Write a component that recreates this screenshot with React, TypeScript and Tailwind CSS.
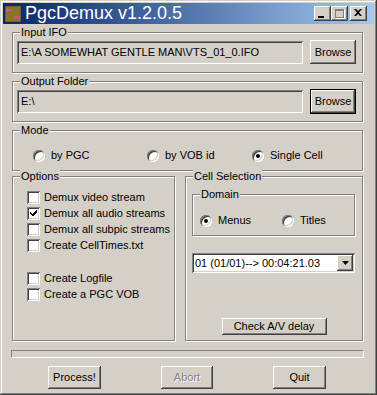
import React from 'react';

const raised =
  'bg-[#d4d0c8] shadow-[inset_-1px_-1px_#404040,inset_1px_1px_#ffffff,inset_-2px_-2px_#808080,inset_2px_2px_#d4d0c8]';
const sunken =
  'shadow-[inset_1px_1px_#808080,inset_-1px_-1px_#ffffff,inset_2px_2px_#404040,inset_-2px_-2px_#d4d0c8]';

function Group({ label, className, children }: { label: string; className?: string; children?: React.ReactNode }) {
  return (
    <div className={`relative border border-[#808080] shadow-[1px_1px_0_#ffffff,inset_1px_1px_0_#ffffff] ${className || ''}`}>
      <span className="absolute left-[7px] top-[-7px] bg-[#d4d0c8] px-[1px] leading-[13px]">{label}</span>
      {children}
    </div>
  );
}

function Button({ children, className, isDefault, disabled }: { children: React.ReactNode; className?: string; isDefault?: boolean; disabled?: boolean }) {
  const inner = (
    <div className={`flex h-full w-full items-center justify-center ${raised} ${disabled ? 'text-[#808080] [text-shadow:1px_1px_0_#ffffff]' : ''}`}>
      {children}
    </div>
  );
  if (isDefault) {
    return <div className={`border border-black ${className || ''}`}>{inner}</div>;
  }
  return <div className={className}>{inner}</div>;
}

function Radio({ checked, label, className }: { checked?: boolean; label: string; className?: string }) {
  return (
    <div className={`flex items-center ${className || ''}`}>
      <div className={`flex h-[12px] w-[12px] items-center justify-center rounded-full bg-white ${sunken}`}>
        {checked && <div className="h-[4px] w-[4px] rounded-full bg-black" />}
      </div>
      <span className="ml-[6px] leading-[13px]">{label}</span>
    </div>
  );
}

function Check({ checked, label }: { checked?: boolean; label: string }) {
  return (
    <div className="flex h-[16px] items-center">
      <div className={`relative h-[13px] w-[13px] bg-white ${sunken}`}>
        {checked && (
          <svg className="absolute left-[3px] top-[3px]" width="7" height="7" viewBox="0 0 7 7">
            <path d="M0 2h1v1h1v1h1V3h1V2h1V1h1V0h1v3h-1v1h-1v1h-1v1h-1v1H3V6H2V5H1V4H0z" fill="#000" />
          </svg>
        )}
      </div>
      <span className="ml-[4px] leading-[13px]">{label}</span>
    </div>
  );
}

function TextField({ value }: { value: string }) {
  return (
    <div className={`flex h-[23px] w-[286px] items-center pl-[4px] ${sunken}`}>
      <span className="whitespace-nowrap">{value}</span>
    </div>
  );
}

function AppIcon() {
  return (
    <svg width="16" height="16" viewBox="0 0 16 16">
      <rect width="16" height="16" fill="#85762c" />
      <rect x="0" y="0" width="16" height="16" fill="none" stroke="#5c5020" strokeWidth="1" />
      <path d="M1 4h6M3 2l-2 2 2 2M9 11h6M13 9l2 2-2 2" stroke="#ff30ff" strokeWidth="1" fill="none" />
    </svg>
  );
}

export default function App() {
  return (
    <div className="relative h-[395px] w-[377px] overflow-hidden bg-[#d4d0c8] p-[3px] font-['Liberation_Sans',Arial,sans-serif] text-[11px] text-black shadow-[inset_-1px_-1px_#404040,inset_1px_1px_#d4d0c8,inset_-2px_-2px_#808080,inset_2px_2px_#ffffff]">
      {/* title bar */}
      <div className="flex h-[21px] items-center bg-gradient-to-r from-[#0a246a] to-[#a6caf0] pl-[2px] pr-[7px]">
        <AppIcon />
        <span className="ml-[4px] text-[18px] leading-[21px] text-white">PgcDemux v1.2.0.5</span>
        <div className="ml-auto flex items-center">
          <div className={`relative h-[15px] w-[17px] ${raised}`}>
            <div className="absolute bottom-[3px] left-[4px] h-[2px] w-[6px] bg-black" />
          </div>
          <div className={`relative h-[15px] w-[17px] ${raised}`}>
            <div className="absolute left-[4px] top-[3px] h-[9px] w-[9px] border border-t-2 border-[#808080] shadow-[1px_1px_0_#ffffff]" />
          </div>
          <div className={`relative ml-[2px] h-[15px] w-[17px] ${raised}`}>
            <svg className="absolute left-[4px] top-[3px]" width="8" height="7" viewBox="0 0 8 7">
              <path d="M0 0h2l2 2 2-2h2L5 3.5 8 7H6L4 5 2 7H0l3-3.5z" fill="#000" />
            </svg>
          </div>
        </div>
      </div>

      <div className="flex flex-col pl-[9px] pr-[11px]">
        <Group label="Input IFO" className="mt-[8px] h-[41px]">
          <div className="flex items-center pl-[4px] pt-[7px]">
            <TextField value="E:\A SOMEWHAT GENTLE MAN\VTS_01_0.IFO" />
            <Button className="ml-[7px] h-[24px] w-[46px]">Browse</Button>
          </div>
        </Group>

        <Group label="Output Folder" className="mt-[8px] h-[41px]">
          <div className="flex items-center pl-[4px] pt-[7px]">
            <TextField value="E:\" />
            <Button isDefault className="ml-[7px] h-[25px] w-[46px]">Browse</Button>
          </div>
        </Group>

        <Group label="Mode" className="mt-[8px] h-[41px]">
          <div className="flex items-center pl-[20px] pt-[18px]">
            <Radio label="by PGC" className="w-[114px]" />
            <Radio label="by VOB id" className="w-[105px]" />
            <Radio label="Single Cell" checked />
          </div>
        </Group>

        <div className="mt-[5px] flex h-[165px] gap-[10px]">
          <Group label="Options" className="w-[163px]">
            <div className="flex flex-col pl-[14px] pt-[12px]">
              <Check label="Demux video stream" />
              <Check label="Demux all audio streams" checked />
              <Check label="Demux all subpic streams" />
              <Check label="Create CellTimes.txt" />
              <div className="h-[17px]" />
              <Check label="Create Logfile" />
              <Check label="Create a PGC VOB" />
            </div>
          </Group>

          <Group label="Cell Selection" className="flex w-[178px] flex-col">
            <Group label="Domain" className="ml-[6px] mr-[7px] mt-[17px] h-[42px]">
              <div className="flex items-center pl-[7px] pt-[19px]">
                <Radio label="Menus" checked className="w-[82px]" />
                <Radio label="Titles" />
              </div>
            </Group>
            <div className={`ml-[6px] mt-[17px] flex h-[20px] w-[163px] items-center bg-white pl-[3px] pr-[2px] ${sunken}`}>
              <span className="whitespace-nowrap">01 (01/01)--&gt; 00:04:21.03</span>
              <div className={`ml-auto flex h-[16px] w-[16px] items-center justify-center ${raised}`}>
                <svg width="7" height="4" viewBox="0 0 7 4">
                  <path d="M0 0h7L3.5 4z" fill="#000" />
                </svg>
              </div>
            </div>
            <div className="mt-auto flex justify-center pb-[5px]">
              <Button className="h-[17px] w-[105px]">Check A/V delay</Button>
            </div>
          </Group>
        </div>

        <div className="-ml-[1px] mt-[9px] h-[8px] w-[353px] border border-b-white border-l-[#808080] border-r-white border-t-[#808080]" />

        <div className="mt-[8px] flex pl-[36px]">
          <Button className="h-[23px] w-[53px]">Process!</Button>
          <Button disabled className="ml-[60px] h-[23px] w-[52px]">Abort</Button>
          <Button className="ml-[60px] h-[23px] w-[53px]">Quit</Button>
        </div>
      </div>
    </div>
  );
}
